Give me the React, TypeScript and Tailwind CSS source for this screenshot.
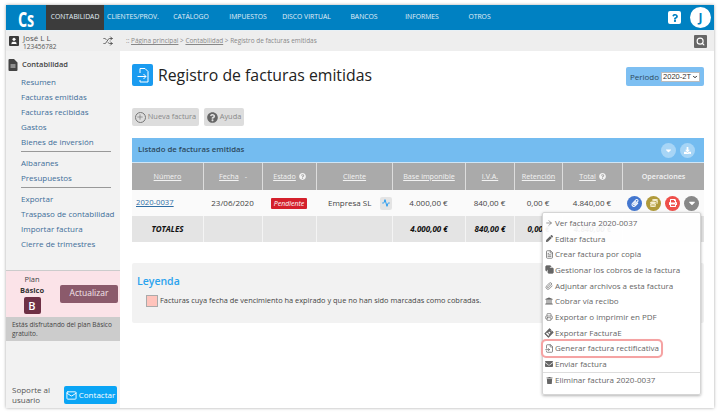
import React from 'react';
import { Shuffle, Search, Plus, Mail, ChevronDown, ArrowRight, FileText, Paperclip, Printer, FileInput, User, Copy, Activity } from 'lucide-react';
import { FaCoins, FaEnvelope, FaPrint, FaPaperclip, FaTrash, FaPen, FaQuestionCircle, FaQuestion, FaDownload, FaCaretDown, FaUniversity, FaIdBadge } from 'react-icons/fa';

const navItems = [
  { label: 'CLIENTES/PROV.', w: 'w-[58px]' },
  { label: 'CATÁLOGO', w: 'w-[58px]' },
  { label: 'IMPUESTOS', w: 'w-[56px]' },
  { label: 'DISCO VIRTUAL', w: 'w-[61px]' },
  { label: 'BANCOS', w: 'w-[54px]' },
  { label: 'INFORMES', w: 'w-[62px]' },
  { label: 'OTROS', w: 'w-[53px]' },
];

const cols = 'grid grid-cols-[71px_59px_54px_76px_73px_49px_48px_60px_82px]';

const Sidebar = () => (
  <aside className="w-[114px] shrink-0 bg-[#f2f2f2] flex flex-col text-[8px]">
    <div className="h-[20px] bg-[#eeeeee] flex items-center pl-[3px] pr-[7px]">
      <div className="w-[10px] h-[10px] bg-[#3a3a3a] rounded-[1px] flex items-center justify-center">
        <User size={8} color="#fff" fill="#fff" strokeWidth={1} />
      </div>
      <div className="ml-[4px] text-[#555] leading-[9px] mt-[1px]">
        <div className="text-[8px]">José L L</div>
        <div className="text-[6.5px]">123456782</div>
      </div>
      <Shuffle size={10} className="ml-auto text-[#444]" />
    </div>
    <div className="flex items-center mt-[7px] pl-[2px] h-[14px]">
      <svg width="10" height="12" viewBox="0 0 10 12">
        <path d="M0.5 1a1 1 0 0 1 1-1H6l3.5 3.5V11a1 1 0 0 1-1 1h-7a1 1 0 0 1-1-1z" fill="#444" />
        <path d="M2.5 6h5M2.5 8h5" stroke="#fff" strokeWidth="0.8" />
      </svg>
      <span className="ml-[4px] font-semibold text-[#444] text-[7.5px]">Contabilidad</span>
    </div>
    <div className="pl-[15px] pr-[9px] text-[#3f6e99] text-[8px] leading-[15px] mt-[2px] whitespace-nowrap">
      <div>Resumen</div>
      <div>Facturas emitidas</div>
      <div>Facturas recibidas</div>
      <div>Gastos</div>
      <div>Bienes de inversión</div>
      <div className="border-t border-[#999] mt-[2px] pt-[3px]">Albaranes</div>
      <div>Presupuestos</div>
      <div className="border-t border-[#999] mt-[2px] pt-[3px]">Exportar</div>
      <div>Traspaso de contabilidad</div>
      <div>Importar factura</div>
      <div>Cierre de trimestres</div>
    </div>
    <div className="mt-[19px] h-[47px] bg-[#fbe3e8] border-t border-[#ccc] flex items-center pl-[13px] pr-[2px]">
      <div className="w-[26px] flex flex-col items-center text-[#444] leading-[11px] text-[7.5px]">
        <div>Plan</div>
        <div className="font-bold text-[#333] whitespace-nowrap">Básico</div>
        <div className="w-[17px] h-[17px] mt-[1px] bg-[#6e3045] rounded-[2px] text-white text-[11px] font-semibold flex items-center justify-center">B</div>
      </div>
      <div className="ml-auto w-[58px] h-[18px] mb-[1px] bg-[#8b5a6b] rounded-[2px] text-[#f3e6ea] flex items-center justify-center text-[8.5px]">Actualizar</div>
    </div>
    <div className="h-[24px] bg-[#cccccc] pl-[6px] pr-[3px] pt-[3px] text-[#444] text-[6.5px] leading-[9px]">
      Estás disfrutando del plan Básico gratuito.
    </div>
    <div className="mt-auto mb-[3px] flex items-center pl-[6px] pr-[3px] text-[#555] text-[8px] leading-[10px]">
      <div>Soporte al<br />usuario</div>
      <div className="ml-auto w-[53px] h-[18px] bg-[#0aa5f5] rounded-[2px] text-white flex items-center justify-center gap-[2px]">
        <Mail size={11} />
        <span>Contactar</span>
      </div>
    </div>
  </aside>
);

const Head = ({ children }: { children: React.ReactNode }) => (
  <div className="flex items-center justify-center gap-[3px] border-l border-[#dddddd] first:border-l-0 text-[#f2f2f2] text-[7.2px]">
    {children}
  </div>
);

const InvoiceTable = () => (
  <section className="mt-[12px] relative">
    <div className="h-[24px] bg-[#74bcf0] flex items-center pl-[6px] pr-[9px] text-[7.8px] font-semibold text-[#2d4a5e]">
      <span>Listado de facturas emitidas</span>
      <div className="ml-auto flex gap-[4px]">
        <div className="w-[15px] h-[15px] rounded-full bg-[#a7d5f6] flex items-center justify-center"><FaCaretDown size={9} color="#fff" /></div>
        <div className="w-[15px] h-[15px] rounded-full bg-[#a7d5f6] flex items-center justify-center"><FaDownload size={7} color="#fff" /></div>
      </div>
    </div>
    <div className={`${cols} h-[28px] bg-[#aaaaaa] border-t border-[#cfe6f7]`}>
      <Head><u>Número</u></Head>
      <Head><u>Fecha</u><span className="ml-[3px]">-</span></Head>
      <Head><u>Estado</u><FaQuestionCircle size={7} /></Head>
      <Head><u>Cliente</u></Head>
      <Head><u className="whitespace-nowrap">Base imponible</u></Head>
      <Head><u>I.V.A.</u></Head>
      <Head><u>Retención</u></Head>
      <Head><u>Total</u><FaQuestionCircle size={7} /></Head>
      <Head><span className="font-semibold">Operaciones</span></Head>
    </div>
    <div className={`${cols} h-[26px] bg-[#fafafa] text-[8px] text-[#444]`}>
      <div className="flex items-center pl-[4px] text-[#2f6ea5] underline text-[7.7px]">2020-0037</div>
      <div className="flex items-center justify-center">23/06/2020</div>
      <div className="flex items-center justify-center">
        <span className="bg-[#d4202c] text-white italic text-[7px] px-[3px] h-[11px] leading-[11px] rounded-[1px]">Pendiente</span>
      </div>
      <div className="flex items-center pl-[12px] whitespace-nowrap">
        <span>Empresa SL</span>
        <span className="ml-[9px] w-[13px] h-[13px] bg-[#e4e4e4] rounded-[2px] flex items-center justify-center">
          <Activity size={8} color="#2a9df0" strokeWidth={3} />
        </span>
      </div>
      <div className="flex items-center justify-center">4.000,00 €</div>
      <div className="flex items-center justify-center">840,00 €</div>
      <div className="flex items-center justify-center">0,00 €</div>
      <div className="flex items-center justify-center">4.840,00 €</div>
      <div className="flex items-center justify-center gap-[4px]">
        <span className="w-[15px] h-[15px] rounded-full bg-[#4477cf] flex items-center justify-center"><FaPaperclip size={8} color="#fff" /></span>
        <span className="w-[15px] h-[15px] rounded-full bg-[#b09a3a] flex items-center justify-center"><FaCoins size={8} color="#f5edd0" /></span>
        <span className="w-[15px] h-[15px] rounded-full bg-[#ee4f4a] flex items-center justify-center"><FaPrint size={8} color="#fff" /></span>
        <span className="w-[15px] h-[15px] rounded-full bg-[#888888] flex items-center justify-center"><FaCaretDown size={10} color="#fff" /></span>
      </div>
    </div>
    <div className={`${cols} h-[26px] bg-[#e4e4e4] text-[8px] text-[#111] font-bold italic`}>
      <div className="flex items-center justify-center">TOTALES</div>
      <div className="border-l border-[#f4f4f4]" />
      <div className="border-l border-[#f4f4f4]" />
      <div className="border-l border-[#f4f4f4]" />
      <div className="border-l border-[#f4f4f4] flex items-center justify-center">4.000,00 €</div>
      <div className="border-l border-[#f4f4f4] flex items-center justify-center">840,00 €</div>
      <div className="border-l border-[#f4f4f4] flex items-center justify-center">0,00 €</div>
      <div className="border-l border-[#f4f4f4] flex items-center justify-center">4.840,00 €</div>
      <div className="border-l border-[#f4f4f4]" />
    </div>
    <OperationsMenu />
  </section>
);

const menuItems = [
  { label: 'Ver factura 2020-0037', icon: <ArrowRight size={8} /> },
  { label: 'Editar factura', icon: <FaPen size={7} /> },
  { label: 'Crear factura por copia', icon: <FileText size={9} /> },
  { label: 'Gestionar los cobros de la factura', icon: <Copy size={9} fill="#666" /> },
  { label: 'Adjuntar archivos a esta factura', icon: <Paperclip size={8} /> },
  { label: 'Cobrar vía recibo', icon: <FaUniversity size={8} /> },
  { label: 'Exportar o imprimir en PDF', icon: <Printer size={8} /> },
  { label: 'Exportar FacturaE', icon: <FaIdBadge size={8} className="rotate-45" /> },
  { label: 'Generar factura rectificativa', icon: <FileInput size={9} />, active: true },
  { label: 'Enviar factura', icon: <FaEnvelope size={8} /> },
  { label: 'Eliminar factura 2020-0037', icon: <FaTrash size={7} />, divided: true },
];

const OperationsMenu = () => (
  <div className="absolute left-[410px] top-[74px] w-[159px] h-[183px] bg-white/95 border border-[#d5d5d5] rounded-[2px] shadow-[0_1px_3px_rgba(0,0,0,0.3)] pt-[2px] text-[8px] text-[#666] z-10">
    {menuItems.map((item) => (
      <div
        key={item.label}
        className={`h-[15.7px] flex items-center pl-[1px] pr-[2px] whitespace-nowrap ${item.active ? 'w-fit rounded-[3px] outline-2 outline-[#f5a3a3] shadow-[0_0_3px_#f5a3a3]' : ''} ${item.divided ? 'border-t border-[#ddd] w-full' : ''}`}
      >
        <span className="w-[10px] flex justify-center text-[#666]">{item.icon}</span>
        <span className="ml-[1px]">{item.label}</span>
      </div>
    ))}
  </div>
);

export default function App() {
  return (
    <div className="w-[720px] h-[414px] bg-white overflow-hidden pt-[5px] pl-[6px]" style={{ fontFamily: '"Open Sans", sans-serif' }}>
      <div className="w-[708px] h-[403px] bg-white flex flex-col shadow-[0_0_3px_rgba(0,0,0,0.35)]">
        <header className="h-[26px] shrink-0 bg-[#0081c2] flex items-stretch text-[6.8px] text-[#e2eff7] border-b border-[#e8f0f5]">
          <div className="w-[40px] flex items-center justify-center text-white font-bold text-[22px] leading-none scale-x-[0.65]">Cs</div>
          <div className="w-[58px] bg-[#3c3c3c] flex items-center justify-center">CONTABILIDAD</div>
          {navItems.map((n) => (
            <div key={n.label} className={`${n.w} flex items-center justify-center whitespace-nowrap`}>{n.label}</div>
          ))}
          <div className="ml-auto flex items-center pr-[3px] gap-[9px]">
            <div className="w-[13px] h-[13px] bg-white rounded-[2px] flex items-center justify-center">
              <FaQuestion size={8} color="#0081c2" />
            </div>
            <div className="w-[21px] h-[21px] rounded-full bg-white text-[#0081c2] font-bold text-[12px] flex items-center justify-center">J</div>
          </div>
        </header>
        <div className="flex flex-1 min-h-0">
          <Sidebar />
          <main className="flex-1 min-w-0 flex flex-col">
            <div className="h-[20px] bg-[#eeeeee] flex items-center pl-[6px] pr-[7px] text-[6.4px] text-[#888]">
              <span>:: <u>Página principal</u> &gt; <u>Contabilidad</u> &gt; Registro de facturas emitidas</span>
              <div className="ml-auto w-[13px] h-[13px] bg-[#666] rounded-[1px] flex items-center justify-center">
                <Search size={9} color="#fff" strokeWidth={3} />
              </div>
            </div>
            <div className="pl-[12px] pr-[10px] flex-1">
              <div className="mt-[13px] h-[22px] flex items-center">
                <div className="w-[21px] h-[22px] bg-[#1a9bf0] rounded-[2px] flex items-center justify-center">
                  <svg width="14" height="17" viewBox="0 0 14 17" fill="none" stroke="#fff" strokeWidth="1">
                    <path d="M4 6V1.5h5l3 3V15H4v-2" />
                    <path d="M1.5 9.5h8.5M7.5 7l2.5 2.5L7.5 12" />
                  </svg>
                </div>
                <h1 className="ml-[5px] text-[15.8px] leading-none text-[#222] mt-[1px]">Registro de facturas emitidas</h1>
                <div className="ml-auto w-[78px] h-[19px] bg-[#7dbff2] rounded-[2px] flex items-center justify-center gap-[2px] text-[8px] text-[#2d4a5e] mt-[3px]">
                  <span>Periodo</span>
                  <span className="w-[39px] h-[10px] bg-white border border-[#bbb] text-[#333] text-[7.5px] leading-[9px] flex items-center justify-between px-[1px]" style={{ fontFamily: '"Liberation Sans", sans-serif' }}>
                    2020-2T<ChevronDown size={6} strokeWidth={4} color="#222" />
                  </span>
                </div>
              </div>
              <div className="mt-[22px] flex gap-[5px] text-[7.4px] text-[#888]">
                <div className="w-[67px] h-[18px] bg-[#dddddd] rounded-[2px] flex items-center justify-center gap-[2px]">
                  <span className="w-[11px] h-[11px] rounded-full border border-[#777] flex items-center justify-center"><Plus size={8} color="#777" /></span>
                  <span>Nueva factura</span>
                </div>
                <div className="w-[40px] h-[18px] bg-[#dddddd] rounded-[2px] flex items-center justify-center gap-[2px]">
                  <FaQuestionCircle size={11} color="#666" />
                  <span>Ayuda</span>
                </div>
              </div>
              <InvoiceTable />
              <section className="mt-[21px] h-[60px] bg-[#f2f2f2] rounded-[2px] pl-[5px] pt-[9px]">
                <h2 className="text-[10.5px] leading-[18px] font-semibold text-[#2aa3ee]">Leyenda</h2>
                <div className="mt-[5px] ml-[9px] flex items-center text-[7.4px] text-[#444]">
                  <span className="w-[12px] h-[12px] bg-[#ffc4bc] border border-[#aaa]" />
                  <span className="ml-[2px]">Facturas cuya fecha de vencimiento ha expirado y que no han sido marcadas como cobradas.</span>
                </div>
              </section>
            </div>
          </main>
        </div>
      </div>
    </div>
  );
}
